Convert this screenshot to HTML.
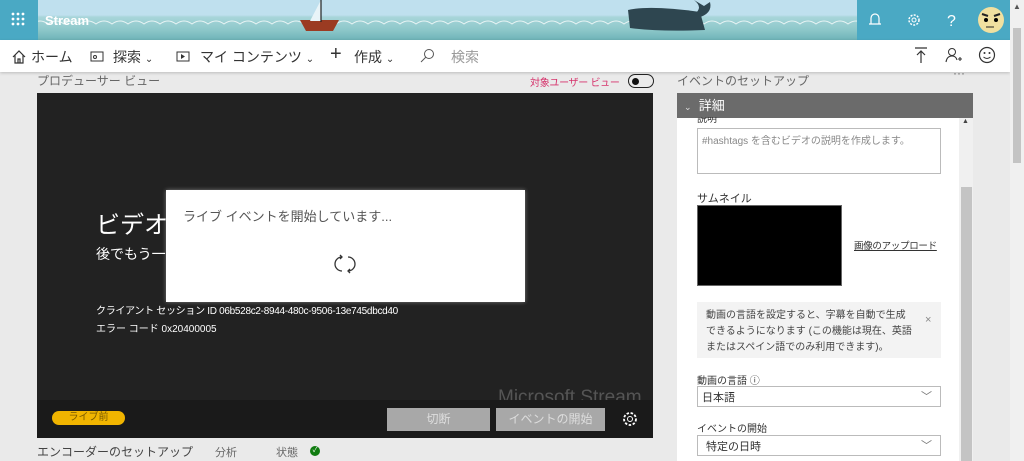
<!DOCTYPE html>
<html><head><meta charset="utf-8"><style>
*{margin:0;padding:0;box-sizing:border-box}
body{width:1024px;height:461px;overflow:hidden;background:#eaeaea;font-family:"Liberation Sans","Noto Sans CJK JP",sans-serif;position:relative;color:#333}
.a{position:absolute}
.hdr{left:0;top:0;width:1010px;height:40px;background:linear-gradient(#bfe0ee 0,#bfe0ee 15px,#a8d6da 17px,#8cc7c9 30px,#6eb3b8 40px)}
.nav{left:0;top:40px;width:1010px;height:32px;background:#fff;box-shadow:0 1px 3px rgba(0,0,0,.2)}
.nav span{position:absolute;top:7px;font-size:14px;color:#333}
.sb{left:1010px;top:0;width:14px;height:461px;background:#f0f0f0}
</style></head><body>
<div class="a hdr"></div>
<svg class="a" style="left:0;top:0" width="1010" height="40">
<path d="M0 24 q8 -6 16 0 q8 -6 16 0 q8 -6 16 0 q8 -6 16 0 q8 -6 16 0 q8 -6 16 0 q8 -6 16 0 q8 -6 16 0 q8 -6 16 0 q8 -6 16 0 q8 -6 16 0 q8 -6 16 0 q8 -6 16 0 q8 -6 16 0 q8 -6 16 0 q8 -6 16 0 q8 -6 16 0 q8 -6 16 0 q8 -6 16 0 q8 -6 16 0 q8 -6 16 0 q8 -6 16 0 q8 -6 16 0 q8 -6 16 0 q8 -6 16 0 q8 -6 16 0 q8 -6 16 0 q8 -6 16 0 q8 -6 16 0 q8 -6 16 0 q8 -6 16 0 q8 -6 16 0 q8 -6 16 0 q8 -6 16 0 q8 -6 16 0 q8 -6 16 0 q8 -6 16 0 q8 -6 16 0 q8 -6 16 0 q8 -6 16 0 q8 -6 16 0 q8 -6 16 0 q8 -6 16 0 q8 -6 16 0 q8 -6 16 0 q8 -6 16 0 q8 -6 16 0 q8 -6 16 0 q8 -6 16 0 q8 -6 16 0 q8 -6 16 0 q8 -6 16 0 q8 -6 16 0 q8 -6 16 0 q8 -6 16 0 q8 -6 16 0 q8 -6 16 0 q8 -6 16 0 q8 -6 16 0 q8 -6 16 0 q8 -6 16 0 q8 -6 16 0 q8 -6 16 0 q8 -6 16 0" fill="none" stroke="#e8f4f4" stroke-width="1"/>
<rect x="0" y="0" width="38" height="40" fill="#4aa9c4"/>
<rect x="857" y="0" width="153" height="40" fill="#4aa9c4"/>
<path d="M300 20 L339 20 L333 31 L306 31Z" fill="#9b3b22"/><path d="M321 0 L321 21 L310 21Z" fill="#e8f4f8"/><line x1="321" y1="0" x2="321" y2="22" stroke="#222" stroke-width="1.2"/>
<path d="M628 10 Q650 5 700 12 L705 30 Q660 32 630 28Z" fill="#2e4650"/><path d="M697 18 Q713 14 710 2 L704 6 L694 0 Q704 8 694 14Z" fill="#2e4650"/>
<g fill="#fff"><circle cx="13" cy="14" r="1.4"/><circle cx="18" cy="14" r="1.4"/><circle cx="23" cy="14" r="1.4"/><circle cx="13" cy="19" r="1.4"/><circle cx="18" cy="19" r="1.4"/><circle cx="23" cy="19" r="1.4"/><circle cx="13" cy="24" r="1.4"/><circle cx="18" cy="24" r="1.4"/><circle cx="23" cy="24" r="1.4"/></g>
<text x="45" y="25" font-size="13" font-weight="bold" fill="#fff" font-family="Liberation Sans">Stream</text>
<path d="M871 24 v-6 a4 4 0 0 1 8 0 v6 z M869 24 h12" fill="none" stroke="#fff" stroke-width="1.2"/>
<circle cx="914" cy="20" r="5" fill="none" stroke="#fff" stroke-width="1.5" stroke-dasharray="2 1.3"/><circle cx="914" cy="20" r="2" fill="none" stroke="#fff"/>
<text x="947" y="26" font-size="16" fill="#fff">?</text>
<circle cx="991" cy="20" r="13" fill="#f0e0a0"/><path d="M982 14 l6 2 M1000 14 l-6 2" stroke="#222" stroke-width="2"/><circle cx="986" cy="20" r="2"/><circle cx="996" cy="20" r="2"/><path d="M986 27 h8" stroke="#222"/>
</svg>
<div class="a nav">
<svg class="a" style="left:11px;top:9px" width="16" height="16"><path d="M2 8 L8 2 L14 8 M4 6 V14 H12 V6 M7 14 V10 H9 V14" fill="none" stroke="#333" stroke-width="1.2"/></svg>
<span style="left:31px">ホーム</span>
<svg class="a" style="left:90px;top:11px" width="14" height="12"><rect x="1" y="1" width="12" height="9" fill="none" stroke="#333"/><circle cx="5" cy="6" r="1.5" fill="none" stroke="#333"/></svg>
<span style="left:113px">探索 <small style="font-size:10px">⌄</small></span>
<svg class="a" style="left:176px;top:11px" width="14" height="12"><rect x="1" y="1" width="12" height="9" fill="none" stroke="#333"/><path d="M5 3 L9 5.5 L5 8Z" fill="#333"/></svg>
<span style="left:200px">マイ コンテンツ <small style="font-size:10px">⌄</small></span>
<span style="left:330px;top:3px;font-size:20px;font-weight:300">+</span>
<span style="left:354px">作成 <small style="font-size:10px">⌄</small></span>
<svg class="a" style="left:419px;top:8px" width="16" height="16"><circle cx="10" cy="6" r="4.5" fill="none" stroke="#555"/><path d="M7 9 L2 14" stroke="#555"/></svg>
<span style="left:451px;color:#999">検索</span>
<svg class="a" style="left:913px;top:6px" width="16" height="18"><path d="M2 2 H14 M8 5 V17 M4 9 L8 5 L12 9" fill="none" stroke="#333" stroke-width="1.2"/></svg>
<svg class="a" style="left:945px;top:6px" width="18" height="18"><circle cx="7" cy="6" r="3.5" fill="none" stroke="#333"/><path d="M1 16 Q2 10 7 10 Q11 10 12 14 M13 13 h4 M15 11 v4" fill="none" stroke="#333" stroke-width="1.1"/></svg>
<svg class="a" style="left:978px;top:6px" width="18" height="18"><circle cx="9" cy="9" r="7.5" fill="none" stroke="#333" stroke-width="1.2"/><circle cx="6.5" cy="7" r="1" fill="#333"/><circle cx="11.5" cy="7" r="1" fill="#333"/><path d="M5.5 11 Q9 14 12.5 11" fill="none" stroke="#333"/></svg>
</div>
<div class="a sb"><div class="a" style="left:3px;top:2px;font-size:8px;color:#555">▲</div><div class="a" style="left:3px;top:28px;width:8px;height:135px;background:#c4c4c4"></div></div>

<div class="a" style="left:37px;top:72px;font-size:12px;color:#666">プロデューサー ビュー</div>
<div class="a" style="left:530px;top:74px;font-size:10px;color:#d6336c;letter-spacing:-0.3px">対象ユーザー ビュー</div>
<div class="a" style="left:628px;top:74px;width:26px;height:14px;border:1.5px solid #222;border-radius:8px"><div class="a" style="left:3px;top:2.5px;width:7px;height:7px;border-radius:50%;background:#111"></div></div>

<div class="a" style="left:37px;top:93px;width:616px;height:345px;background:#222"></div>
<div class="a" style="left:498px;top:387px;font-size:19px;color:#555">Microsoft Stream</div>
<div class="a" style="left:37px;top:400px;width:616px;height:38px;background:#1a1a1a"></div>
<div class="a" style="left:96px;top:205px;font-size:24px;color:#fff">ビデオの</div>
<div class="a" style="left:96px;top:244px;font-size:14px;color:#fff">後でもう一度</div>
<div class="a" style="left:96px;top:302px;font-size:10px;color:#fff;letter-spacing:-0.3px">クライアント セッション ID 06b528c2-8944-480c-9506-13e745dbcd40</div>
<div class="a" style="left:96px;top:320px;font-size:10px;color:#fff">エラー コード 0x20400005</div>
<div class="a" style="left:52px;top:411px;width:73px;height:14px;background:#f0b400;border-radius:7px;font-size:10px;color:#7a5a00;text-align:center;line-height:14px">ライブ前</div>
<div class="a" style="left:387px;top:408px;width:103px;height:23px;background:#a8a8a8;font-size:12px;color:#ddd;text-align:center;line-height:23px">切断</div>
<div class="a" style="left:496px;top:408px;width:109px;height:23px;background:#a8a8a8;font-size:12px;color:#ddd;text-align:center;line-height:23px">イベントの開始</div>
<svg class="a" style="left:621px;top:410px" width="18" height="18"><circle cx="9" cy="9" r="6" fill="none" stroke="#fff" stroke-width="1.8" stroke-dasharray="2.5 1.6"/><circle cx="9" cy="9" r="2.5" fill="none" stroke="#fff"/></svg>

<div class="a" style="left:166px;top:190px;width:359px;height:112px;background:#fff;box-shadow:0 0 4px rgba(255,255,255,.4)"></div>
<div class="a" style="left:183px;top:206px;font-size:13px;color:#555">ライブ イベントを開始しています...</div>
<svg class="a" style="left:334px;top:253px" width="22" height="22"><path d="M8 4 A7 7 0 0 0 8 18 M14 4 A7 7 0 0 1 14 18 M6 2 L8 4 L6 6 M16 20 L14 18 L16 16" fill="none" stroke="#333" stroke-width="1.3"/></svg>

<div class="a" style="left:37px;top:443px;font-size:12px;color:#444">エンコーダーのセットアップ</div>
<div class="a" style="left:215px;top:444px;font-size:11px;color:#666">分析</div>
<div class="a" style="left:276px;top:444px;font-size:11px;color:#666">状態</div>
<div class="a" style="left:310px;top:446px;width:10px;height:10px;border-radius:50%;background:#107c10;color:#fff;font-size:7px;text-align:center;line-height:10px">✓</div>

<div class="a" style="left:677px;top:72px;font-size:12px;color:#666">イベントのセットアップ</div>
<div class="a" style="left:953px;top:66px;font-size:12px;color:#666">···</div>
<div class="a" style="left:677px;top:117px;width:282px;height:344px;background:#fff"></div>
<div class="a" style="left:959px;top:117px;width:14px;height:344px;background:#f0f0f0"><div class="a" style="left:3px;top:1px;font-size:7px;color:#444">▲</div><div class="a" style="left:2px;top:70px;width:11px;height:274px;background:#c4c4c4"></div></div>
<div class="a" style="left:677px;top:93px;width:296px;height:25px;background:#6b6b6b;color:#fff;font-size:13px;line-height:25px;padding-left:7px"><span style="font-size:9px;color:#ddd">⌄</span>&nbsp; 詳細</div>
<div class="a" style="left:697px;top:117px;font-size:10px;color:#333;height:8px;overflow:hidden;line-height:6px">説明</div>
<div class="a" style="left:697px;top:128px;width:244px;height:46px;border:1px solid #bbb;font-size:10px;color:#888;padding:3px 4px">#hashtags を含むビデオの説明を作成します。</div>
<div class="a" style="left:697px;top:190px;font-size:11px;color:#333">サムネイル</div>
<div class="a" style="left:697px;top:205px;width:145px;height:81px;background:#000;border:1px solid #666"></div>
<div class="a" style="left:854px;top:238px;font-size:9.5px;color:#333;text-decoration:underline;letter-spacing:-0.3px">画像のアップロード</div>
<div class="a" style="left:697px;top:302px;width:244px;height:56px;background:#f3f3f3;font-size:10px;color:#444;padding:6px 28px 6px 9px;line-height:16px">動画の言語を設定すると、字幕を自動で生成できるようになります (この機能は現在、英語またはスペイン語でのみ利用できます)。</div>
<div class="a" style="left:925px;top:314px;font-size:11px;color:#888">×</div>
<div class="a" style="left:697px;top:372px;font-size:10px;color:#333">動画の言語 ⓘ</div>
<div class="a" style="left:697px;top:386px;width:244px;height:21px;border:1px solid #bbb;font-size:11px;color:#333;padding:2px 4px">日本語<span style="position:absolute;right:8px;top:1px;color:#777">﹀</span></div>
<div class="a" style="left:697px;top:420px;font-size:10px;color:#333">イベントの開始</div>
<div class="a" style="left:697px;top:435px;width:244px;height:21px;border:1px solid #bbb;font-size:11px;color:#333;padding:2px 8px">特定の日時<span style="position:absolute;right:8px;top:1px;color:#777">﹀</span></div>
</body></html>
